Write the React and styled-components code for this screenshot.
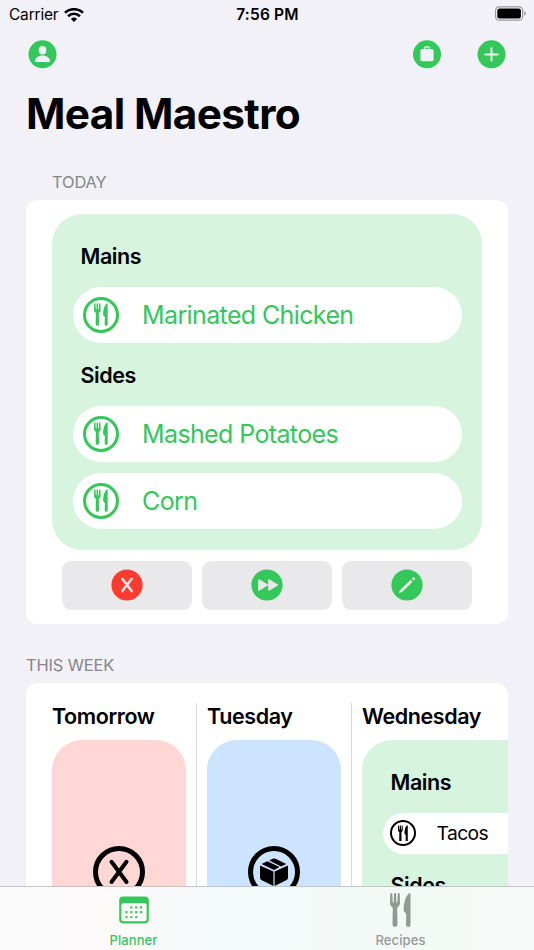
import React from 'react';
import styled, { createGlobalStyle } from 'styled-components';

const GREEN = '#34c759';

const GlobalStyle = createGlobalStyle`
  * {
    box-sizing: border-box;
  }
  body {
    margin: 0;
    background: #f2f1f7;
    color: #000;
    font-family: Inter, "Liberation Sans", sans-serif;
  }
`

const Screen = styled.div`
  display: flex;
  flex-direction: column;
  height: 950px;
  overflow: hidden;
  background: #f2f1f7;
`
const StatusBar = styled.div`
  display: grid;
  grid-template-columns: 1fr auto 1fr;
  align-items: center;
  flex: none;
  height: 28px;
  padding: 0 8px 0 9px;
  font-size: 15.5px;
  line-height: 28px;
`
const Carrier = styled.div`
  display: flex;
  align-items: center;
  gap: 5.5px;
  padding-top: 1px;
  letter-spacing: -0.2px;
`
const Time = styled.div`
  padding-top: 1px;
  font-weight: 560;
  letter-spacing: 0.2px;
`
const Battery = styled.div`
  display: flex;
  justify-content: flex-end;
  padding-bottom: 2px;
`
const NavBar = styled.div`
  display: flex;
  justify-content: space-between;
  flex: none;
  padding: 12px 28.5px 0 28px;
`
const NavGroup = styled.div`
  display: flex;
  gap: 36px;
`
const RoundButton = styled.button`
  display: flex;
  padding: 0;
  border: none;
  background: none;
  cursor: pointer;
`
const Title = styled.h1`
  flex: none;
  margin: 19px 0 1px;
  padding-left: 26px;
  font-size: 42.3px;
  font-weight: 700;
  line-height: 52px;
  letter-spacing: -0.62px;
`
const SectionLabel = styled.h2`
  flex: none;
  margin: ${(p) => p.$top}px 0 0;
  padding-left: ${(p) => p.$left}px;
  color: #85858a;
  font-size: 16.4px;
  font-weight: 400;
  line-height: 20px;
  letter-spacing: -0.1px;
`
const Card = styled.section`
  flex: none;
  margin: 8px 26px 0;
  border-radius: 12px;
  background: #fff;
  overflow: hidden;
`
const TodayCard = styled(Card)`
  height: 424px;
  padding: 14px 26px;
`
const WeekCard = styled(Card)`
  display: flex;
  height: 420px;
  padding: 20px 0 0 26px;
`
const Meals = styled.div`
  height: ${(p) => p.$height}px;
  padding: 28.5px 20.5px 0;
  border-radius: 30px;
  background: #d7f4df;
`
const Course = styled.h3`
  margin: 0 0 ${(p) => p.$gap}px;
  padding-left: 8px;
  font-size: 21.5px;
  font-weight: 570;
  line-height: 26px;
  letter-spacing: -0.42px;
`
const Dish = styled.div`
  display: flex;
  align-items: center;
  height: ${(p) => (p.$small ? 41 : 56.5)}px;
  margin-bottom: ${(p) => p.$bottom || 0}px;
  padding-left: ${(p) => (p.$small ? 7 : 10)}px;
  gap: ${(p) => (p.$small ? 21 : 23)}px;
  border-radius: 29px;
  background: #fff;
  color: ${(p) => (p.$small ? '#000' : GREEN)};
  font-size: ${(p) => (p.$small ? 19.3 : 25)}px;
  letter-spacing: ${(p) => (p.$small ? -0.6 : -0.62)}px;
  white-space: nowrap;
`
const Ring = styled.span`
  display: flex;
  align-items: center;
  justify-content: center;
  flex: none;
  width: ${(p) => p.$size}px;
  height: ${(p) => p.$size}px;
  border: ${(p) => p.$line}px solid currentColor;
  border-radius: 50%;
`
const Actions = styled.div`
  display: flex;
  gap: 10px;
  padding: 11px 10px 0;
`
const Action = styled.button`
  display: flex;
  align-items: center;
  justify-content: center;
  flex: 1;
  height: 48.5px;
  padding: 0;
  border: none;
  border-radius: 9px;
  background: #e9e9eb;
  cursor: pointer;
`
const Day = styled.div`
  flex: none;
  width: ${(p) => p.$width || 134}px;
`
const DayName = styled.h3`
  margin: 0 0 10px;
  font-size: 21.5px;
  font-weight: 570;
  line-height: 27px;
  letter-spacing: -0.4px;
`
const Divider = styled.div`
  flex: none;
  width: 1px;
  margin: 0 10px;
  background: #dcdcde;
`
const EmptyDay = styled.div`
  display: flex;
  align-items: center;
  justify-content: center;
  height: 263px;
  border-radius: 30px;
  background: ${(p) => p.$tint};
`
const TabBar = styled.nav`
  position: fixed;
  left: 0;
  right: 0;
  bottom: 0;
  display: flex;
  height: 64.5px;
  border-top: 1px solid #c3c5c6;
  background: linear-gradient(90deg, #fafafa 0%, #fcf9f9 22%, #f4f9fa 43%, #f4f9f8 62%, #f3f9f5 82%, #f7f9f9 100%);
`
const Tab = styled.div`
  display: flex;
  flex-direction: column;
  align-items: center;
  flex: 1;
  color: ${(p) => (p.$active ? GREEN : '#939895')};
  font-size: 13px;
  font-weight: 500;
  line-height: 16px;
  letter-spacing: 0.1px;
`
const TabIcon = styled.span`
  display: flex;
  align-items: center;
  justify-content: center;
  height: 34px;
  margin: 6.5px 0 4.5px;
`

const ForkKnife = ({ width, height }) => (
  <svg width={width} height={height} viewBox="0 0 21 34" fill="currentColor">
    <path d="M.3 1Q.4 0 1.300 0t1 1L2.700 9q0 .5.500.5t.500-.5L3.900 1Q4 0 5 0t1.100 1L6.300 9q0 .5.500.5T7.300 9L7.700 1q.1-1 1-1t1 1L10 10q.1 2.700-1.800 3.800-1 .6-1 1.600l.3 16.200Q7.500 34 5 34t-2.500-2.400l.3-16.200q0-1-1-1.600Q-.1 12.700 0 10z" />
    <path d="M20.500 1v30.700q0 2.300-2.200 2.300T16 31.700l.3-10.300q0-.9-.7-1.500l-1.500-1.500q-.6-.6-.5-1.600.2-11 4.900-16Q20.500-.8 20.500 1z" />
  </svg>
)

const Wifi = () => (
  <svg width="20" height="15" viewBox="0 0 20 15" fill="none" stroke="#000" strokeWidth="2.6">
    <path d="M1 4.800a13 13 0 0 1 18 0" />
    <path d="M4.100 8.200a8.500 8.500 0 0 1 11.800 0" />
    <path d="M10 14 6.900 10.900a4.400 4.400 0 0 1 6.200 0z" fill="#000" stroke="none" />
  </svg>
)

const BatteryIcon = () => (
  <svg width="31" height="15" viewBox="0 0 31 15">
    <rect x=".6" y=".8" width="27" height="13.400" rx="3.800" fill="#fff" stroke="#96969a" strokeWidth="1.200" />
    <rect x="2.300" y="2.500" width="23.600" height="10" rx="2" />
    <path d="M29.300 5.300q1.500.6 1.500 2.200t-1.500 2.200z" fill="#8e8e92" />
  </svg>
)

const PersonIcon = () => (
  <svg width="29" height="29" viewBox="0 0 29 29">
    <circle cx="14.500" cy="14.300" r="14" fill={GREEN} />
    <ellipse cx="14.500" cy="10.200" rx="3.800" ry="4.300" fill="#f2f1f7" />
    <path d="M7 20.900c0-2.800 3.200-5.500 7.500-5.500s7.500 2.700 7.500 5.500q0 1.200-1.200 1.200H8.200Q7 22.100 7 20.900z" fill="#f2f1f7" />
  </svg>
)

const BagIcon = () => (
  <svg width="28" height="29" viewBox="0 0 28 29">
    <circle cx="14" cy="14.300" r="14" fill={GREEN} />
    <path d="M11.500 10V8.800q0-2.100 2.500-2.100t2.500 2.100V10" fill="none" stroke="#f2f1f7" strokeWidth="1.200" />
    <rect x="7.400" y="8.900" width="13.200" height="12.400" rx="2" fill="#f2f1f7" />
  </svg>
)

const PlusIcon = () => (
  <svg width="29" height="29" viewBox="0 0 29 29">
    <circle cx="14.500" cy="14.300" r="14" fill={GREEN} />
    <path d="M14.500 8.200v12.400M8.300 14.400h12.400" stroke="#f2f1f7" strokeWidth="2" strokeLinecap="round" />
  </svg>
)

const SkipIcon = () => (
  <svg width="32" height="32" viewBox="0 0 32 32">
    <circle cx="16" cy="16" r="15.600" fill="#ff3b30" />
    <path d="M11.300 9.700 20.700 22.100M20.700 9.700 11.300 22.100" stroke="#e9e9eb" strokeWidth="2.500" strokeLinecap="round" />
  </svg>
)

const ForwardIcon = () => (
  <svg width="32" height="32" viewBox="0 0 32 32" fill="#e9e9eb" stroke="#e9e9eb" strokeLinejoin="round" strokeWidth="1.400">
    <circle cx="16" cy="16" r="15.600" fill={GREEN} stroke="none" />
    <path d="M7.900 10.900v10.200l8.600-5.100zM17.900 10.900v10.200l8.600-5.100z" />
  </svg>
)

const PencilIcon = () => (
  <svg width="32" height="32" viewBox="0 0 32 32" fill="#e9e9eb">
    <circle cx="16" cy="16" r="15.600" fill={GREEN} />
    <path d="M19.700 10.700 21.700 12.700 11.400 22.800 8.300 24q-.5 0-.4-.5l1.400-2.700z" />
    <path d="m20.800 9.600 1.100-1.100q.8-.6 1.500 0l.5.5q.7.8 0 1.500l-1.100 1.100z" />
  </svg>
)

const CrossIcon = () => (
  <svg width="22" height="26" viewBox="0 0 22 26" stroke="#000" strokeWidth="4" strokeLinecap="round">
    <path d="M3.500 2.800 18.500 23M18.500 2.800 3.500 23" />
  </svg>
)

const BoxIcon = () => (
  <svg width="28" height="29" viewBox="0 0 28 29">
    <path d="M0 8.500 13.400 14.600V29L1.300 22.900Q0 22.200 0 20.800zM28 8.500 14.600 14.600V29l12.100-6.100q1.300-.7 1.300-2.100zM1.600 7 7.300 4.300l12.200 5.800L14 12.900zM9.200 3.400l3.400-1.600q1.400-.7 2.800 0L26.400 7l-5.300 2.400z" />
  </svg>
)

const CalendarIcon = () => (
  <svg width="30" height="28" viewBox="0 0 30 28" fill={GREEN}>
    <path fillRule="evenodd" d="M4 .4h22q3.800 0 3.800 3.800v19.400q0 3.800-3.800 3.800H4Q.2 27.400.2 23.600V4.200Q.2.400 4 .4zM4.200 7.300q-1.800 0-1.800 1.800v14.200q0 1.900 1.900 1.900h21.400q1.900 0 1.900-1.900V9.100q0-1.800-1.800-1.800z" />
    {[[12.3, 11.3], [17.2, 11.3], [22, 11.3], [7.4, 16.1], [12.3, 16.1], [17.2, 16.1], [22, 16.1], [7.4, 21], [12.3, 21], [17.2, 21]].map(([x, y]) => (
      <rect key={`${x}-${y}`} x={x - 1.1} y={y - 1.1} width="2.200" height="2.200" rx=".5" />
    ))}
  </svg>
)

const MealDish = ({ name, small, bottom }) => (
  <Dish $small={small} $bottom={bottom}>
    <Ring $size={small ? 26 : 36.5} $line={small ? 2 : 3}>
      {small ? <ForkKnife width={10} height={16.5} /> : <ForkKnife width={14} height={23} />}
    </Ring>
    {name}
  </Dish>
)

const App = () => {
  return (
    <Screen>
      <GlobalStyle />
      <StatusBar>
        <Carrier>Carrier <Wifi /></Carrier>
        <Time>7:56 PM</Time>
        <Battery><BatteryIcon /></Battery>
      </StatusBar>
      <NavBar>
        <RoundButton aria-label="Profile"><PersonIcon /></RoundButton>
        <NavGroup>
          <RoundButton aria-label="Groceries"><BagIcon /></RoundButton>
          <RoundButton aria-label="Add"><PlusIcon /></RoundButton>
        </NavGroup>
      </NavBar>
      <Title>Meal Maestro</Title>

      <SectionLabel $top={31} $left={52}>TODAY</SectionLabel>
      <TodayCard>
        <Meals $height={336}>
          <Course $gap={18}>Mains</Course>
          <MealDish name="Marinated Chicken" bottom={18.5} />
          <Course $gap={18}>Sides</Course>
          <MealDish name="Mashed Potatoes" bottom={10.5} />
          <MealDish name="Corn" />
        </Meals>
        <Actions>
          <Action aria-label="Skip"><SkipIcon /></Action>
          <Action aria-label="Forward"><ForwardIcon /></Action>
          <Action aria-label="Edit"><PencilIcon /></Action>
        </Actions>
      </TodayCard>

      <SectionLabel $top={31} $left={26}>THIS WEEK</SectionLabel>
      <WeekCard>
        <Day>
          <DayName>Tomorrow</DayName>
          <EmptyDay $tint="#ffd8d6">
            <Ring $size={52} $line={5}><CrossIcon /></Ring>
          </EmptyDay>
        </Day>
        <Divider />
        <Day>
          <DayName>Tuesday</DayName>
          <EmptyDay $tint="#cce4ff">
            <Ring $size={52} $line={5}><BoxIcon /></Ring>
          </EmptyDay>
        </Day>
        <Divider />
        <Day $width={300}>
          <DayName>Wednesday</DayName>
          <Meals $height={263}>
            <Course $gap={18}>Mains</Course>
            <MealDish name="Tacos" small bottom={18} />
            <Course $gap={18}>Sides</Course>
          </Meals>
        </Day>
      </WeekCard>

      <TabBar>
        <Tab $active>
          <TabIcon><CalendarIcon /></TabIcon>
          Planner
        </Tab>
        <Tab>
          <TabIcon><ForkKnife width={21} height={34} /></TabIcon>
          Recipes
        </Tab>
      </TabBar>
    </Screen>
  )
}

export default App
